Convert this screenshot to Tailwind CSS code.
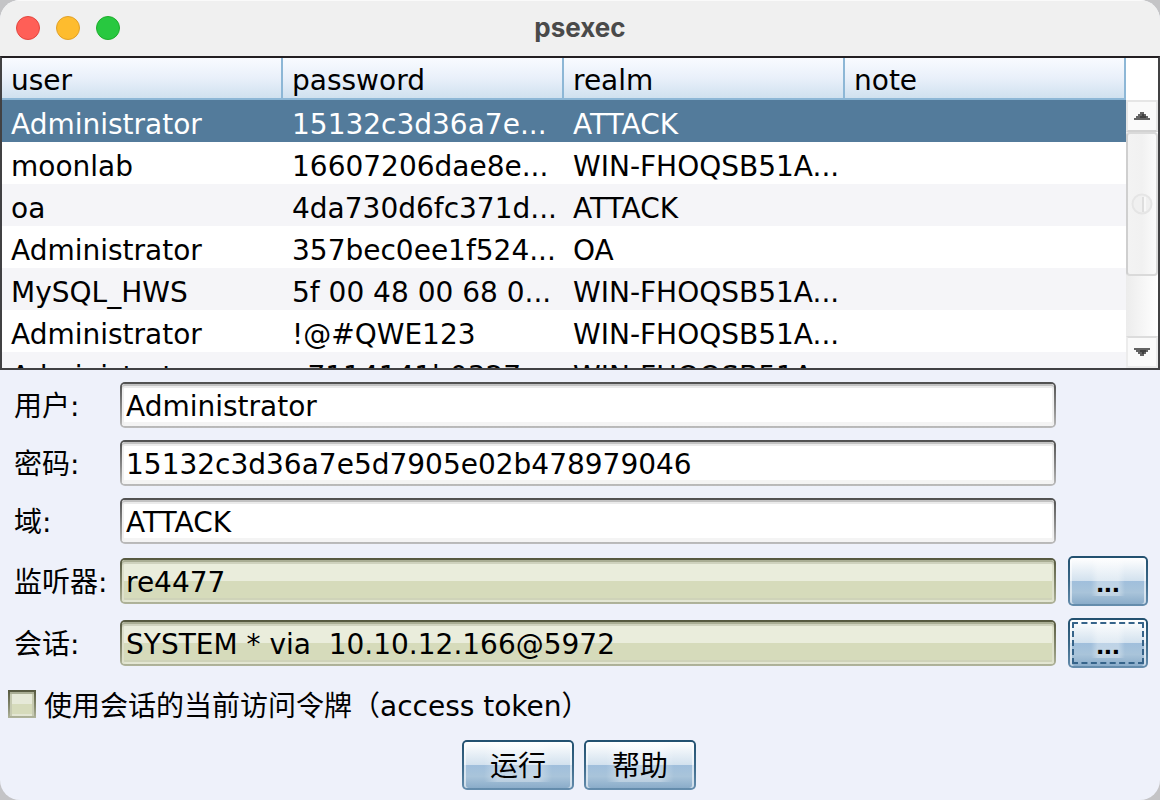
<!DOCTYPE html>
<html lang="zh-CN">
<head>
    <meta charset="UTF-8">
    <meta name="viewport" content="width=device-width, initial-scale=1.0">
    <title>psexec</title>
    <script src="https://cdn.jsdelivr.net/npm/@tailwindcss/browser@4"></script>
</head>
<body class="bg-[#c4c4c6]">
    <div class="flex h-screen flex-col overflow-hidden rounded-[20px] bg-[#eef1fa] font-['DejaVu_Sans','Noto_Sans_CJK_SC',sans-serif] text-[28px] leading-9 text-black">

        <!-- Title bar -->
        <header class="grid h-14 shrink-0 grid-cols-[120px_1fr_120px] items-center bg-[#f0f0f0] shadow-[inset_0_1px_0_#fafafa]">
            <div class="flex gap-4 pl-4">
                <button aria-label="Close" class="size-6 rounded-full border border-[#e2463f] bg-[#ff5f57]"></button>
                <button aria-label="Minimize" class="size-6 rounded-full border border-[#e0a028] bg-[#febc2e]"></button>
                <button aria-label="Zoom" class="size-6 rounded-full border border-[#1dad2b] bg-[#28c840]"></button>
            </div>
            <h1 class="text-center font-['Inter',sans-serif] text-[26px] font-bold text-[#4a4a4a]">psexec</h1>
        </header>

        <!-- Credentials -->
        <section class="flex min-h-0 flex-1 border-2 border-[#414143] border-t-[#231f22] bg-white">
            <div class="min-w-0 flex-1 overflow-hidden">
                <table class="w-full table-fixed border-separate border-spacing-0 text-left leading-8">
                    <thead>
                        <tr class="[&>th]:h-[42px] [&>th]:border-r-2 [&>th]:border-b-2 [&>th]:border-[#8db7d6] [&>th]:bg-linear-to-b [&>th]:from-[#f9fbff] [&>th]:via-[#e9f0fa] [&>th]:to-[#d0e1ef] [&>th]:p-0 [&>th]:pt-1.5 [&>th]:pl-[9px] [&>th]:font-normal">
                            <th>user</th>
                            <th>password</th>
                            <th>realm</th>
                            <th>note</th>
                        </tr>
                    </thead>
                    <tbody class="[&_td]:h-[42px] [&_td]:p-0 [&_td]:pt-2 [&_td]:pl-[9px] [&_td]:whitespace-nowrap">
                        <tr class="bg-[#537b9b] text-white"><td>Administrator</td><td>15132c3d36a7e...</td><td>ATTACK</td><td></td></tr>
                        <tr class="bg-white"><td>moonlab</td><td>16607206dae8e...</td><td>WIN-FHOQSB51A...</td><td></td></tr>
                        <tr class="bg-[#f5f5f8]"><td>oa</td><td>4da730d6fc371d...</td><td>ATTACK</td><td></td></tr>
                        <tr class="bg-white"><td>Administrator</td><td>357bec0ee1f524...</td><td>OA</td><td></td></tr>
                        <tr class="bg-[#f5f5f8]"><td>MySQL_HWS</td><td>5f 00 48 00 68 0...</td><td>WIN-FHOQSB51A...</td><td></td></tr>
                        <tr class="bg-white"><td>Administrator</td><td>!@#QWE123</td><td>WIN-FHOQSB51A...</td><td></td></tr>
                        <tr class="bg-[#f5f5f8]"><td>Administrator</td><td>c7114141b0327...</td><td>WIN-FHOQSB51A...</td><td></td></tr>
                    </tbody>
                </table>
            </div>

            <!-- Scroll bar -->
            <div class="flex w-8 shrink-0 flex-col pt-[42px]">
                <button aria-label="Scroll up" class="flex h-8 shrink-0 items-center justify-center border-2 border-[#e6e6e6] border-b-[#d2d2d2] bg-[#fafafa]">
                    <svg class="h-2 w-4" viewBox="0 0 16 8" shape-rendering="crispEdges">
                        <path fill="#636363" d="M6 0h4v2h2v2h2v2h2v2H0V6h2V4h2V2h2z"/>
                        <path fill="#404040" d="M8 2h2v2h2v2H6V4h2z"/>
                    </svg>
                </button>
                <div class="flex flex-1 flex-col bg-linear-to-r from-[#ececec] to-white">
                    <div class="flex h-36 items-center justify-center rounded-sm border-2 border-[#dadada] border-l-[#cfcfcf] bg-linear-to-r from-[#f3f3f3] via-[#f1f1f1] to-[#fbfbfb]">
                        <svg class="size-[22px]" viewBox="0 0 22 22" fill="none">
                            <circle cx="11" cy="11" r="9.5" fill="#f0f0f0" stroke="#e5e5e5" stroke-width="2"/>
                            <path stroke="#dedede" stroke-width="2" d="M12 4v15"/>
                            <path stroke="#f8f8f8" stroke-width="2" d="M14 4v14"/>
                        </svg>
                    </div>
                </div>
                <button aria-label="Scroll down" class="flex h-8 shrink-0 items-center justify-center border-2 border-[#ececec] border-t-[#dcdcdc] bg-[#fafafa]">
                    <svg class="h-2 w-4" viewBox="0 0 16 8" shape-rendering="crispEdges">
                        <path fill="#636363" d="M0 0h16v2h-2v2h-2v2h-2v2H6V6H4V4H2V2H0z"/>
                        <path fill="#404040" d="M6 2h6v2h-2v2H8V4H6z"/>
                    </svg>
                </button>
            </div>
        </section>

        <!-- Options -->
        <form class="shrink-0 pt-3 pb-2.5">
            <div class="grid grid-cols-[106px_1fr_92px] items-center gap-y-3 pr-3 pl-3.5 [&>label]:pt-1">
                <label for="user">用户:</label>
                <input id="user" type="text" value="Administrator" class="h-[46px] min-w-0 rounded-[5px] border-2 border-transparent px-1 pt-0.5 outline-none [background:linear-gradient(white,white)_padding-box,linear-gradient(#505050,#8c8c8c_60%,#bcbcbc)_border-box] shadow-[inset_0_2px_0_#c2c2c2,inset_0_4px_0_#ebebeb,inset_2px_0_0_#f0f0f0,inset_-2px_0_0_#f0f0f0,inset_0_-4px_0_#f4f4f4]">
                <span></span>

                <label for="password">密码:</label>
                <input id="password" type="text" value="15132c3d36a7e5d7905e02b478979046" class="h-[46px] min-w-0 rounded-[5px] border-2 border-transparent px-1 pt-0.5 outline-none [background:linear-gradient(white,white)_padding-box,linear-gradient(#505050,#8c8c8c_60%,#bcbcbc)_border-box] shadow-[inset_0_2px_0_#c2c2c2,inset_0_4px_0_#ebebeb,inset_2px_0_0_#f0f0f0,inset_-2px_0_0_#f0f0f0,inset_0_-4px_0_#f4f4f4]">
                <span></span>

                <label for="realm">域:</label>
                <input id="realm" type="text" value="ATTACK" class="h-[46px] min-w-0 rounded-[5px] border-2 border-transparent px-1 pt-0.5 outline-none [background:linear-gradient(white,white)_padding-box,linear-gradient(#505050,#8c8c8c_60%,#bcbcbc)_border-box] shadow-[inset_0_2px_0_#c2c2c2,inset_0_4px_0_#ebebeb,inset_2px_0_0_#f0f0f0,inset_-2px_0_0_#f0f0f0,inset_0_-4px_0_#f4f4f4]">
                <span></span>

                <label for="listener">监听器:</label>
                <input id="listener" type="text" readonly value="re4477" class="h-[46px] min-w-0 rounded-[5px] border-2 border-transparent px-1 pt-0.5 outline-none [background:linear-gradient(#eaeddc_50%,#d6dbbb_50%)_padding-box,linear-gradient(#55583f,#878b70_60%,#b0b49b)_border-box] shadow-[inset_0_2px_0_#a9ad94,inset_0_4px_0_#cfd2be,inset_2px_0_0_#dde0cb,inset_-2px_0_0_#dde0cb,inset_0_-2px_0_#e3e6d3,inset_0_-4px_0_#cfd3b9]">
                <button type="button" aria-label="选择监听器" class="ml-3 h-[50px] rounded-[5px] border-2 border-transparent pt-1 font-['Liberation_Sans',sans-serif] font-bold [background:linear-gradient(to_right,transparent,#ffffff50_20%_80%,transparent)_center_bottom_8px/34px_36px_no-repeat_padding-box,linear-gradient(white,#d2e1ee_50%,#a0bfdc_50%,#a9c4da_75%,#8aacc9)_padding-box,linear-gradient(#22506f,#3a6787_50%,#668eae)_border-box] shadow-[inset_2px_0_0_#ffffff90,inset_-2px_0_0_#ffffff90]">...</button>

                <label for="session">会话:</label>
                <input id="session" type="text" readonly value="SYSTEM * via  10.10.12.166@5972" class="h-[46px] min-w-0 rounded-[5px] border-2 border-transparent px-1 pt-0.5 outline-none [background:linear-gradient(#eaeddc_50%,#d6dbbb_50%)_padding-box,linear-gradient(#55583f,#878b70_60%,#b0b49b)_border-box] shadow-[inset_0_2px_0_#a9ad94,inset_0_4px_0_#cfd2be,inset_2px_0_0_#dde0cb,inset_-2px_0_0_#dde0cb,inset_0_-2px_0_#e3e6d3,inset_0_-4px_0_#cfd3b9]">
                <button type="button" aria-label="选择会话" class="ml-3 h-[50px] rounded-[5px] border-2 border-transparent pt-1 font-['Liberation_Sans',sans-serif] font-bold outline-2 -outline-offset-6 outline-dashed outline-[#36648a] [background:linear-gradient(to_right,transparent,#ffffff50_20%_80%,transparent)_center_bottom_8px/34px_36px_no-repeat_padding-box,linear-gradient(white,#d2e1ee_50%,#a0bfdc_50%,#a9c4da_75%,#8aacc9)_padding-box,linear-gradient(#22506f,#3a6787_50%,#668eae)_border-box] shadow-[inset_2px_0_0_#ffffff90,inset_-2px_0_0_#ffffff90]">...</button>
            </div>

            <div class="my-5 flex h-8 items-center gap-2 pl-2">
                <input id="token" type="checkbox" class="size-7 appearance-none border-2 border-transparent [background:linear-gradient(#e6e9d8_50%,#d6dbbb_50%)_padding-box,linear-gradient(#55583f,#878b70_60%,#b0b49b)_border-box] shadow-[inset_0_2px_0_#a9ad94,inset_2px_0_0_#c6cab1,inset_-2px_0_0_#c6cab1,inset_0_-2px_0_#e3e6d3]">
                <label for="token" class="pt-1.5">使用会话的当前访问令牌（access token）</label>
            </div>

            <div class="flex justify-center gap-2.5 pr-0.5">
                <button type="submit" class="h-[50px] w-28 rounded-[5px] border-2 border-transparent pt-1 [background:linear-gradient(to_right,transparent,#ffffff50_20%_80%,transparent)_center_bottom_6px/68px_38px_no-repeat_padding-box,linear-gradient(white,#d2e1ee_50%,#a0bfdc_50%,#a9c4da_75%,#8aacc9)_padding-box,linear-gradient(#22506f,#3a6787_50%,#668eae)_border-box] shadow-[inset_2px_0_0_#ffffff90,inset_-2px_0_0_#ffffff90]">运行</button>
                <button type="button" class="h-[50px] w-28 rounded-[5px] border-2 border-transparent pt-1 [background:linear-gradient(to_right,transparent,#ffffff50_20%_80%,transparent)_center_bottom_6px/68px_38px_no-repeat_padding-box,linear-gradient(white,#d2e1ee_50%,#a0bfdc_50%,#a9c4da_75%,#8aacc9)_padding-box,linear-gradient(#22506f,#3a6787_50%,#668eae)_border-box] shadow-[inset_2px_0_0_#ffffff90,inset_-2px_0_0_#ffffff90]">帮助</button>
            </div>
        </form>
    </div>
</body>
</html>
